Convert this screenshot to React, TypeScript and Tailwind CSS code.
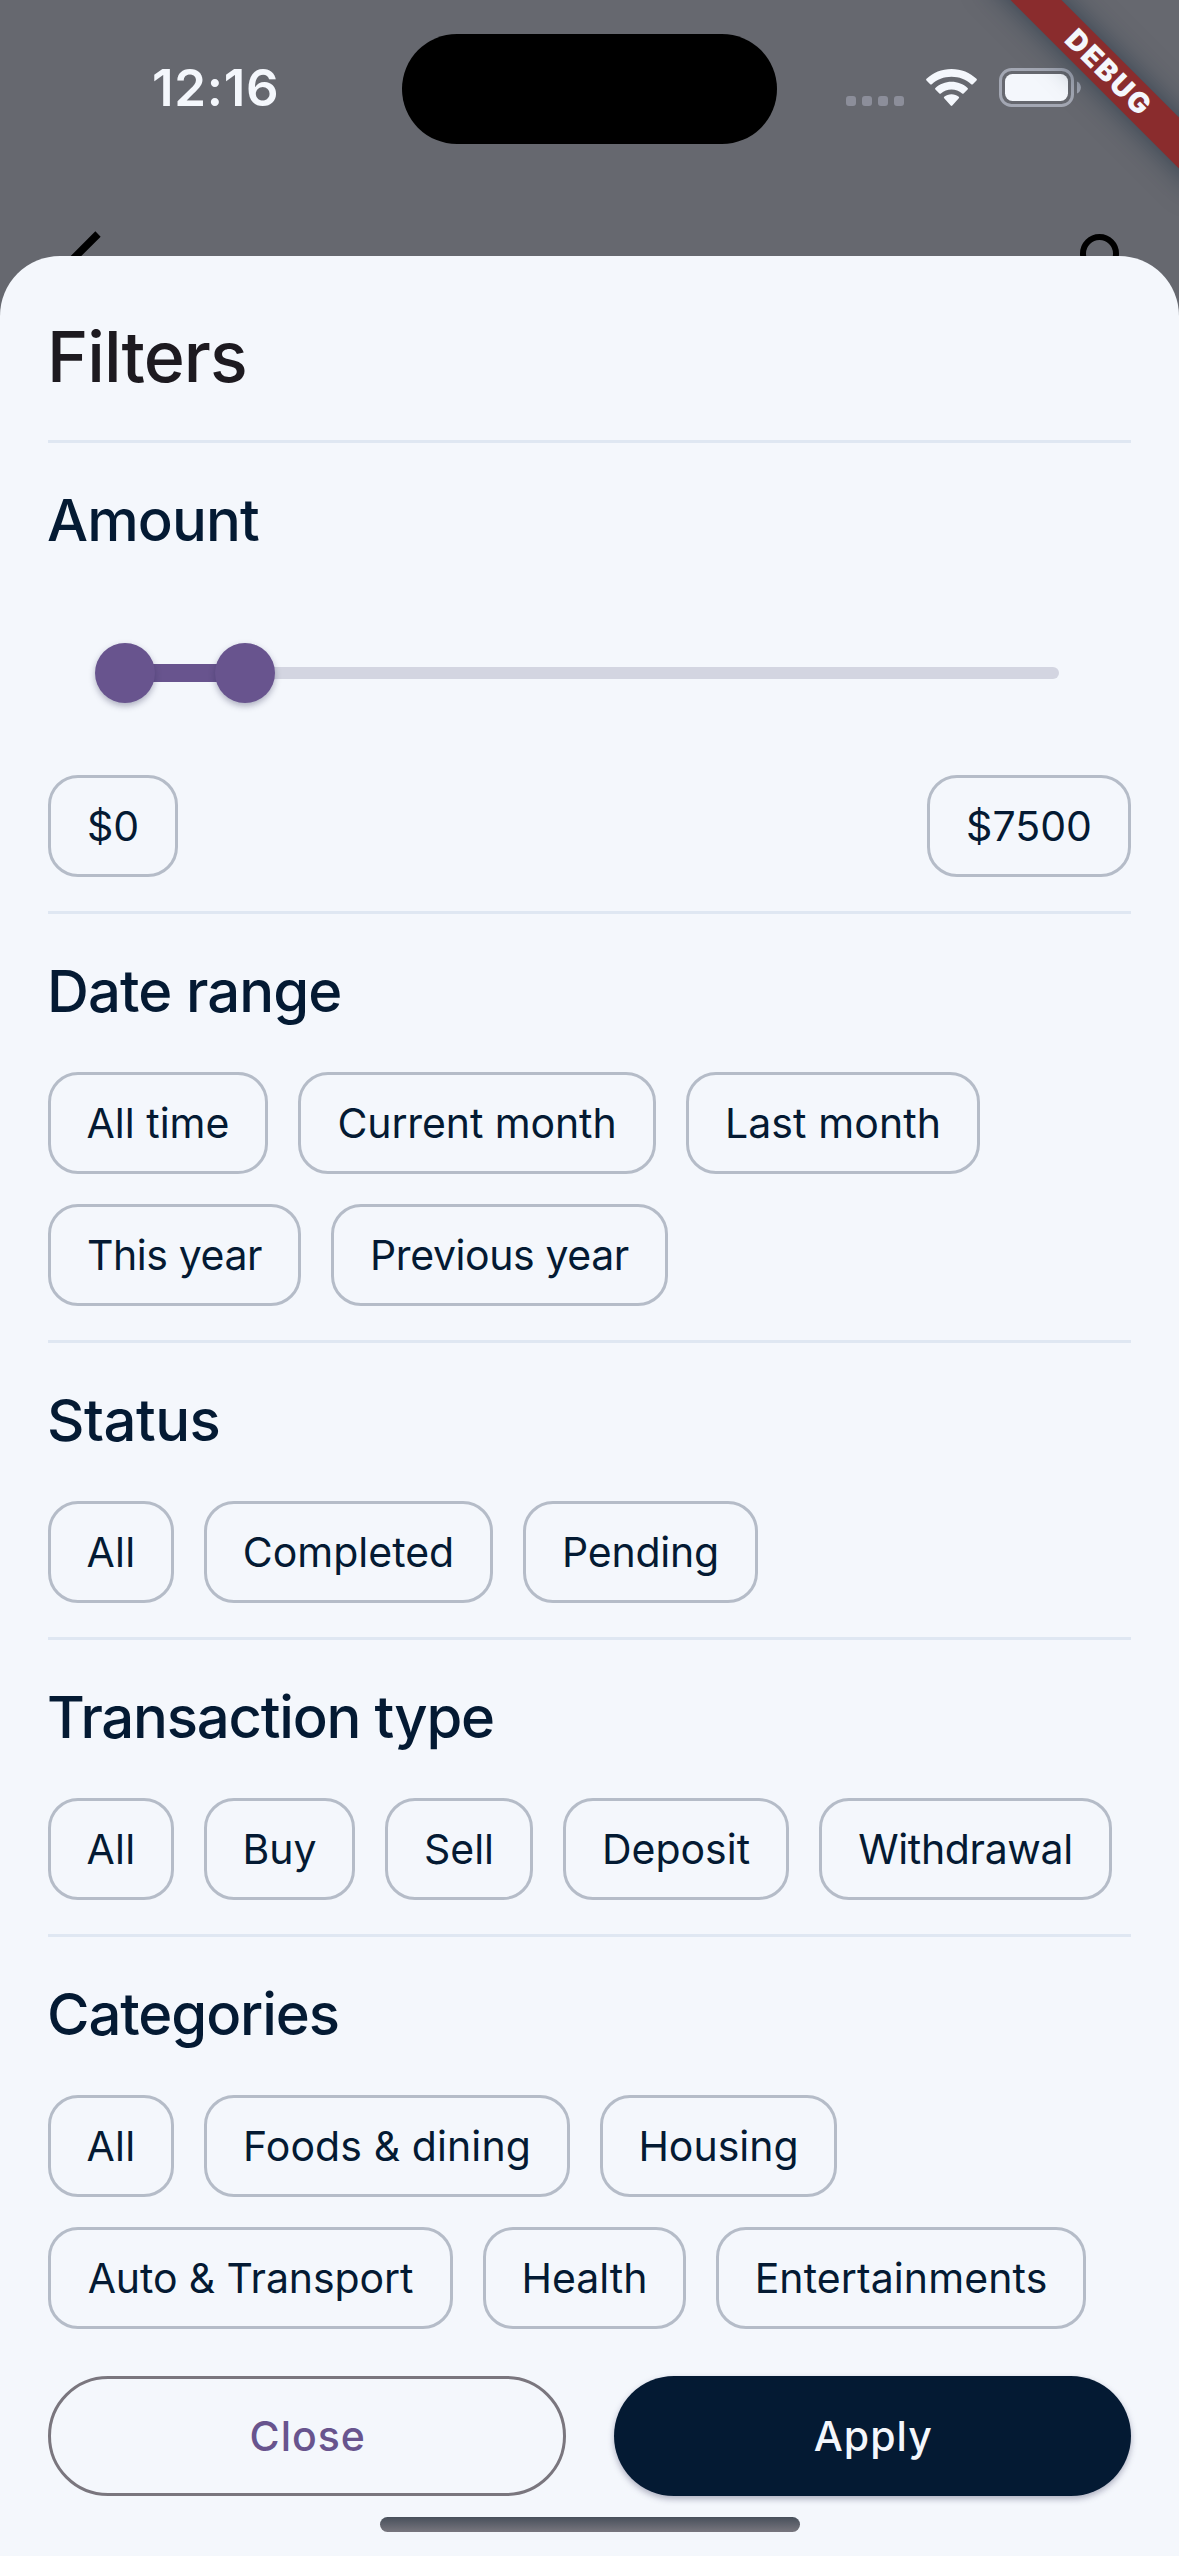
import React from "react";

type Chip = { label: string; box: string };

const dateRange: Chip[] = [
  { label: "All time", box: "w-[220px] tracking-[0px]" },
  { label: "Current month", box: "w-[358px] tracking-[-0.1px]" },
  { label: "Last month", box: "w-[294px] tracking-[0.1px]" },
  { label: "This year", box: "w-[253px] tracking-[-0.4px]" },
  { label: "Previous year", box: "w-[337px] tracking-[-0.4px]" },
];

const status: Chip[] = [
  { label: "All", box: "w-[126px] tracking-[0.3px]" },
  { label: "Completed", box: "w-[289px] tracking-[0px]" },
  { label: "Pending", box: "w-[235px] tracking-[-0.2px]" },
];

const transactionType: Chip[] = [
  { label: "All", box: "w-[126px] tracking-[0.3px]" },
  { label: "Buy", box: "w-[151px] tracking-[0px]" },
  { label: "Sell", box: "w-[148px] tracking-[0px]" },
  { label: "Deposit", box: "w-[226px] tracking-[0px]" },
  { label: "Withdrawal", box: "w-[293px] tracking-[-0.35px]" },
];

const categories: Chip[] = [
  { label: "All", box: "w-[126px] tracking-[0.3px]" },
  { label: "Foods & dining", box: "w-[366px] tracking-[0.1px]" },
  { label: "Housing", box: "w-[237px] tracking-[0px]" },
  { label: "Auto & Transport", box: "w-[405px] tracking-[-0.1px]" },
  { label: "Health", box: "w-[203px] tracking-[0px]" },
  { label: "Entertainments", box: "w-[370px] tracking-[0.1px]" },
];

function ChipButton({ label, box }: Chip) {
  return (
    <button
      className={`${box} flex h-[102px] shrink-0 items-center justify-center whitespace-nowrap rounded-[30px] border-3 border-[#b5bcc8] text-[41px] leading-none text-[#041a33]`}
    >
      {label}
    </button>
  );
}

function Heading({ children, tracking = "tracking-[-1.1px]" }: { children: React.ReactNode; tracking?: string }) {
  return (
    <h2 className={`${tracking} -ml-px h-[158px] text-[58px] font-medium leading-[154px] text-[#041a33]`}>
      {children}
    </h2>
  );
}

function Section({ title, chips, tracking }: { title: string; chips: Chip[]; tracking?: string }) {
  return (
    <section className="border-t-3 border-[#dfe7f2] pb-[34px]">
      <Heading tracking={tracking}>{title}</Heading>
      <div className="flex flex-wrap gap-[30px]">
        {chips.map((chip) => (
          <ChipButton key={chip.label} {...chip} />
        ))}
      </div>
    </section>
  );
}

function RangeSlider() {
  return (
    <div className="relative mx-[47px] mt-[42px] flex h-[60px] items-center">
      <div className="ml-[18px] h-[12px] w-[946px] rounded-full bg-[#d3d5e1]" />
      <div className="absolute left-[30px] h-[18px] w-[120px] bg-[#68548e]" />
      <div className="absolute left-0 size-[60px] rounded-full bg-[#68548e] shadow-[0_3px_6px_rgba(40,40,80,0.35)]" />
      <div className="absolute left-[120px] size-[60px] rounded-full bg-[#68548e] shadow-[0_3px_6px_rgba(40,40,80,0.35)]" />
    </div>
  );
}

function StatusBar() {
  return (
    <header className="relative flex h-[256px] items-start overflow-hidden">
      <div className="ml-[152px] mt-[58px] w-[250px] text-[51px] font-semibold leading-[60px] tracking-[0.7px] text-[#f4f7fc]">
        12:16
      </div>
      <div className="mt-[34px] h-[110px] w-[375px] rounded-full bg-black" />
      <div className="ml-[69px] mt-[96px] flex gap-[6px]">
        {[0, 1, 2, 3].map((dot) => (
          <span key={dot} className="size-[10px] rounded-[3px] bg-[#8c8e9a]" />
        ))}
      </div>
      <svg className="ml-[22px] mt-[69px]" width="51" height="38" viewBox="0 0 51 38" fill="#f4f7fc">
        <path d="M25.5 0C35.3 0 44 3.7 50.5 9.8q.8.8 0 1.600L46.800 15.200q-.8.800-1.600 0C40 10.400 33.100 7.700 25.500 7.700S11 10.400 5.800 15.200q-.800.800-1.600 0L.500 11.400q-.800-.800 0-1.600C7 3.700 15.700 0 25.500 0z" />
        <path d="M25.500 12.700c6.200 0 11.800 2.300 16.100 6.200q.8.800 0 1.600l-4 4q-.700.700-1.500 0a15.700 15.700 0 0 0-21.200 0q-.800.700-1.500 0l-4-4q-.8-.8 0-1.600c4.300-3.900 9.900-6.200 16.100-6.200z" />
        <path d="M25.500 25.200c2.800 0 5.300 1 7.300 2.600q.8.700 0 1.500L26.300 36.500q-.8.800-1.600 0L18.200 29.300q-.8-.8 0-1.500c2-1.600 4.500-2.600 7.300-2.600z" />
      </svg>
      <svg className="ml-[22px] mt-[68px]" width="83" height="39" viewBox="0 0 83 39">
        <rect x="1.500" y="1.500" width="72" height="36" rx="11" fill="none" stroke="#a3a7b3" strokeWidth="3" />
        <rect x="6" y="6" width="63" height="27" rx="7.500" fill="#f4f7fc" />
        <path d="M78 13.500c5.200 2 5.200 10 0 12z" fill="#a3a7b3" />
      </svg>
      <svg className="absolute left-[60px] top-[220px]" width="60" height="60" viewBox="0 0 60 60" fill="none" stroke="#000" strokeWidth="7.500">
        <path d="M38 14 14 38l24 24" />
      </svg>
      <svg className="absolute left-[1070px] top-[224px]" width="60" height="60" viewBox="0 0 60 60" fill="none" stroke="#000" strokeWidth="6">
        <circle cx="29.500" cy="29.500" r="16.500" />
      </svg>
      <div className="absolute left-[956px] top-[52px] flex h-[36px] w-[300px] rotate-45 items-center justify-center bg-[#8a2c2d] pl-[8px] text-[28.5px] font-black leading-none tracking-[2px] text-[#f4f7fc] shadow-[0_0_30px_rgba(20,40,60,0.6)]">
        DEBUG
      </div>
    </header>
  );
}

export default function App() {
  return (
    <div className="flex h-[2556px] w-[1179px] flex-col overflow-hidden bg-[#66686f] font-['Inter',sans-serif]">
      <StatusBar />
      <main className="flex flex-1 flex-col rounded-t-[60px] bg-[#f4f7fc] px-[48px]">
        <h1 className="-ml-px h-[184px] pt-[17px] text-[70px] font-medium leading-[167px] tracking-[-1px] text-[#1d1a20]">
          Filters
        </h1>
        <section className="border-t-3 border-[#dfe7f2] pb-[34px]">
          <Heading tracking="tracking-[-0.9px]">Amount</Heading>
          <RangeSlider />
          <div className="mt-[72px] flex justify-between">
            <ChipButton label="$0" box="w-[130px] tracking-[0px]" />
            <ChipButton label="$7500" box="w-[204px] tracking-[0px]" />
          </div>
        </section>
        <Section title="Date range" chips={dateRange} tracking="tracking-[-0.9px]" />
        <Section title="Status" chips={status} tracking="tracking-[-0.5px]" />
        <Section title="Transaction type" chips={transactionType} tracking="tracking-[-1.2px]" />
        <Section title="Categories" chips={categories} />
        <div className="mt-[13px] grid grid-cols-2 gap-[48px]">
          <button className="h-[120px] rounded-full border-3 border-[#7a767e] pl-[2px] pt-px text-[41px] font-medium tracking-[1px] text-[#68548e]">
            Close
          </button>
          <button className="h-[120px] rounded-full bg-[#041a33] pl-[2px] pt-px text-[41px] font-medium tracking-[1px] text-[#f4f7fc] shadow-[0_3px_6px_rgba(40,40,80,0.35)]">
            Apply
          </button>
        </div>
        <div className="mt-[21px] h-[15px] w-[420px] self-center rounded-full bg-linear-to-b from-[#48505b] to-[#78767e]" />
      </main>
    </div>
  );
}
